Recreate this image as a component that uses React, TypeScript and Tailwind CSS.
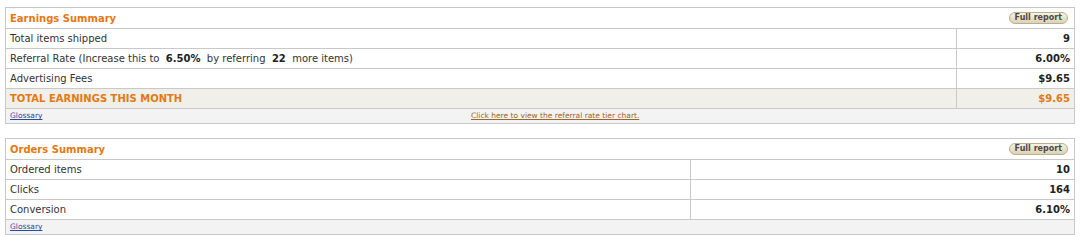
import React from "react";

const font = { fontFamily: '"DejaVu Sans", Verdana, sans-serif' };

function FullReport() {
  return (
    <span className="inline-block rounded-full border border-[#b9ae8e] bg-gradient-to-b from-[#f7f3e3] to-[#dcd3b4] px-[5px] text-[8px] leading-[10px] font-bold text-[#4a4a4a]">
      Full report
    </span>
  );
}

type Row = { label: React.ReactNode; value: string; total?: boolean };

function Summary({
  title,
  rows,
  split,
  footerLink,
}: {
  title: string;
  rows: Row[];
  split: string;
  footerLink?: string;
}) {
  return (
    <table className="w-full border-collapse border border-[#c9c9c9] text-[10px] text-[#333]">
      <tbody>
        <tr className="h-[21px]">
          <td colSpan={2} className="border-b border-[#c9c9c9] px-[4px]">
            <div className="flex items-center justify-between pr-[2px]">
              <span className="font-bold text-[#e47911]">{title}</span>
              <FullReport />
            </div>
          </td>
        </tr>
        {rows.map((r, i) => (
          <tr key={i} className={`h-[20px] ${r.total ? "bg-[#f0efe9]" : ""}`}>
            <td
              className={`border-b border-[#c9c9c9] px-[4px] ${
                r.total ? "font-bold text-[#e47911]" : ""
              }`}
            >
              {r.label}
            </td>
            <td
              className={`${split} border-b border-l border-[#c9c9c9] px-[4px] text-right font-bold ${
                r.total ? "text-[#e47911]" : "text-[#222]"
              }`}
            >
              {r.value}
            </td>
          </tr>
        ))}
        <tr className="h-[15px] bg-[#f3f3f3]">
          <td colSpan={2} className="px-[4px] text-[7.5px]">
            <div className="relative flex items-center">
              <a className="text-[#2a4b9b] underline">Glossary</a>
              {footerLink && (
                <a className="absolute left-[461px] text-[#a0632a] underline">{footerLink}</a>
              )}
            </div>
          </td>
        </tr>
      </tbody>
    </table>
  );
}

export default function App() {
  return (
    <div className="min-h-[242px] bg-white px-[5px] pt-[7px]" style={font}>
      <div className="w-[1070px]">
        <Summary
          title="Earnings Summary"
          split="w-[118px]"
          footerLink="Click here to view the referral rate tier chart."
          rows={[
            { label: "Total items shipped", value: "9" },
            {
              label: (
                <>
                  Referral Rate (Increase this to&nbsp; <b className="text-[#222]">6.50%</b>&nbsp; by referring&nbsp;{" "}
                  <b className="text-[#222]">22</b>&nbsp; more items)
                </>
              ),
              value: "6.00%",
            },
            { label: "Advertising Fees", value: "$9.65" },
            { label: "TOTAL EARNINGS THIS MONTH", value: "$9.65", total: true },
          ]}
        />
        <div className="h-[14px]" />
        <Summary
          title="Orders Summary"
          split="w-[384px]"
          rows={[
            { label: "Ordered items", value: "10" },
            { label: "Clicks", value: "164" },
            { label: "Conversion", value: "6.10%" },
          ]}
        />
      </div>
    </div>
  );
}
